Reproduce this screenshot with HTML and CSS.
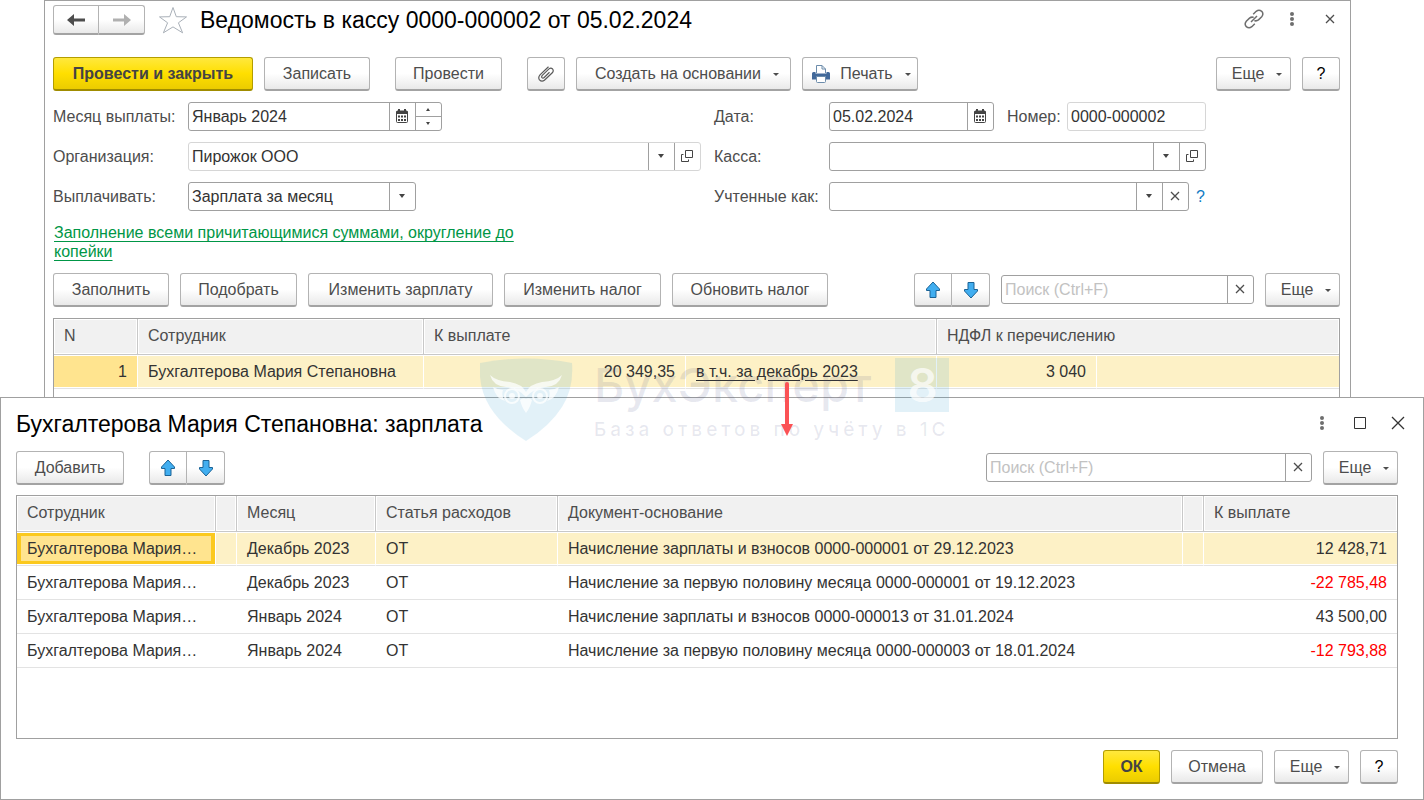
FILE: index.html
```html
<!DOCTYPE html>
<html lang="ru">
<head>
    <meta charset="UTF-8">
    <meta name="viewport" content="width=device-width, initial-scale=1.0">
    <title>Ведомость в кассу 0000-000002 от 05.02.2024</title>
    <link rel="stylesheet" href="styles.css">
</head>
<body>

    <!-- Shared icons -->
    <svg class="sprite" aria-hidden="true">
        <symbol id="i-up" viewBox="0 0 16 18">
            <path d="M8 1 L14.5 8 V9.500 H11 V16.500 H5 V9.500 H1.500 V8 Z" fill="#41aef0" stroke="#1b6396" stroke-width="1" stroke-linejoin="round"/>
        </symbol>
        <symbol id="i-down" viewBox="0 0 16 18">
            <path d="M8 17 L14.5 10 V8.500 H11 V1.500 H5 V8.500 H1.500 V10 Z" fill="#41aef0" stroke="#1b6396" stroke-width="1" stroke-linejoin="round"/>
        </symbol>
        <symbol id="i-calendar" viewBox="0 0 12 14">
            <path d="M1.500 2 H10.500 Q11.500 2 11.500 3 V12.500 Q11.500 13.500 10.500 13.500 H1.500 Q.5 13.500 .5 12.500 V3 Q.5 2 1.500 2 Z" fill="#fff" stroke="#444"/>
            <path d="M.5 2 H11.500 V5 H.5 Z M2 0 H4 V2 H2 Z M8 0 H10 V2 H8 Z" fill="#444"/>
            <path d="M2 6.500 H4 V8.500 H2 Z M5 6.500 H7 V8.500 H5 Z M8 6.500 H10 V8.500 H8 Z M2 10 H4 V12 H2 Z M5 10 H7 V12 H5 Z M8 10 H10 V12 H8 Z" fill="#444"/>
        </symbol>
        <symbol id="i-open" viewBox="0 0 12 12">
            <path d="M4.500 .5 H11.500 V7.500 H4.500 Z M2.500 4.500 H.5 V11.500 H7.500 V9.500" fill="none" stroke="#444"/>
        </symbol>
        <symbol id="i-cross" viewBox="0 0 10 10">
            <path d="M1 1 L9 9 M9 1 L1 9" fill="none" stroke="#4d4d4d" stroke-width="1.300"/>
        </symbol>
        <symbol id="i-dots" viewBox="0 0 4 14">
            <circle cx="2" cy="2" r="2" fill="#6e6e6e"/>
            <circle cx="2" cy="7" r="2" fill="#6e6e6e"/>
            <circle cx="2" cy="12" r="2" fill="#6e6e6e"/>
        </symbol>
    </svg>

    <!-- Document window -->
    <main class="document">
        <header class="title-bar">
            <div class="btn-group nav-group">
                <button class="btn" type="button" aria-label="Назад">
                    <svg width="18" height="12" viewBox="0 0 18 12"><path d="M7 0 V4.500 H18 V7.500 H7 V12 L0 6 Z" fill="#4d4d4d"/></svg>
                </button>
                <button class="btn" type="button" aria-label="Вперед">
                    <svg width="18" height="12" viewBox="0 0 18 12"><path d="M11 0 V4.500 H0 V7.500 H11 V12 L18 6 Z" fill="#b0b0b0"/></svg>
                </button>
            </div>
            <button class="icon-btn star" type="button" aria-label="В избранное">
                <svg width="30" height="28" viewBox="0 0 30 28"><path d="M15 1.500 L18.300 10.700 L28.500 10.900 L20.400 16.800 L24.600 26.800 L15 20.900 L5.400 26.800 L9.600 16.800 L1.500 10.900 L11.700 10.700 Z" fill="#fff" stroke="#a9b0b8"/></svg>
            </button>
            <h1>Ведомость в кассу 0000-000002 от 05.02.2024</h1>
            <div class="window-controls">
                <button class="icon-btn" type="button" aria-label="Получить ссылку">
                    <svg width="20" height="20" viewBox="0 0 20 20"><path d="M9.200 5.300 L12.200 2.300 Q15 .1 17.700 2.300 Q20 5 17.700 7.800 L14.500 10.900 Q12.500 12.400 10.300 11.600 M10.800 14.700 L7.800 17.700 Q5 19.900 2.300 17.700 Q0 15 2.300 12.200 L5.500 9.100 Q7.500 7.600 9.700 8.400 M7 13 L13 7" fill="none" stroke="#6e6e6e" stroke-width="1.500"/></svg>
                </button>
                <button class="icon-btn" type="button" aria-label="Меню"><svg width="4" height="14"><use href="#i-dots"/></svg></button>
                <button class="icon-btn" type="button" aria-label="Закрыть"><svg width="10" height="10"><use href="#i-cross"/></svg></button>
            </div>
        </header>

        <div class="toolbar main-toolbar">
            <button class="btn primary w-200" type="button">Провести и закрыть</button>
            <button class="btn w-106" type="button">Записать</button>
            <button class="btn w-107 apart" type="button">Провести</button>
            <button class="btn w-38 apart" type="button" aria-label="Присоединенные файлы">
                <svg width="18" height="18" viewBox="0 0 18 18"><path d="M11.500 1.800 L3 9.800 Q.8 12.400 2.500 14.800 Q4.700 17.300 7.400 15.300 L15.300 7.800 Q17 5.800 15.600 4 Q13.900 2.400 12 3.900 L5.300 10.300 Q4.200 11.600 5 12.600 Q6 13.500 7.200 12.500 L12.500 7.300" fill="none" stroke="#5a5a5a" stroke-width="1.200"/></svg>
            </button>
            <button class="btn menu w-215" type="button">Создать на основании</button>
            <button class="btn menu w-116" type="button">
                <svg class="printer" width="18" height="18" viewBox="0 0 18 18">
                    <path d="M4.500 8 V.5 H10 L13.500 4 V8 M10 .5 V4 H13.500" fill="#fff" stroke="#6c8cab"/>
                    <path d="M1.500 7 H3.500 V8.500 H14.500 V7 H16.500 Q18 7 18 8.500 V14.500 H0 V8.500 Q0 7 1.500 7 Z" fill="#42699a"/>
                    <path d="M4.500 11.500 H13.500 V16.500 Q13.500 17.500 12.500 17.500 H5.500 Q4.500 17.500 4.500 16.500 Z" fill="#fff" stroke="#6c8cab"/>
                </svg>Печать
            </button>
            <span class="spacer"></span>
            <button class="btn menu w-75" type="button">Еще</button>
            <button class="btn help w-38" type="button">?</button>
        </div>

        <form class="fields">
            <label for="month">Месяц выплаты:</label>
            <div class="line">
                <div class="field month">
                    <input id="month" type="text" value="Январь 2024">
                    <button class="cell" type="button" aria-label="Выбрать месяц"><svg width="12" height="14"><use href="#i-calendar"/></svg></button>
                    <span class="spin">
                        <button type="button" aria-label="Следующий месяц"><svg width="4" height="3" viewBox="0 0 4 3"><path d="M0 3 L2 0 L4 3 Z" fill="#444"/></svg></button>
                        <button type="button" aria-label="Предыдущий месяц"><svg width="4" height="3" viewBox="0 0 4 3"><path d="M0 0 L2 3 L4 0 Z" fill="#444"/></svg></button>
                    </span>
                </div>
            </div>
            <label class="second" for="date">Дата:</label>
            <div class="line">
                <div class="field date">
                    <input id="date" type="text" value="05.02.2024">
                    <button class="cell" type="button" aria-label="Выбрать дату"><svg width="12" height="14"><use href="#i-calendar"/></svg></button>
                </div>
                <label class="number-label" for="number">Номер:</label>
                <div class="field soft grow">
                    <input id="number" type="text" value="0000-000002">
                </div>
            </div>

            <label for="org">Организация:</label>
            <div class="field soft combo">
                <select id="org"><option>Пирожок ООО</option></select>
                <span class="cell arrow"></span>
                <button class="cell" type="button" aria-label="Открыть организацию"><svg width="12" height="12"><use href="#i-open"/></svg></button>
            </div>
            <label class="second" for="cash">Касса:</label>
            <div class="field combo">
                <select id="cash"><option></option></select>
                <span class="cell arrow"></span>
                <button class="cell" type="button" aria-label="Открыть кассу"><svg width="12" height="12"><use href="#i-open"/></svg></button>
            </div>

            <label for="pay">Выплачивать:</label>
            <div class="line">
                <div class="field combo pay">
                    <select id="pay"><option>Зарплата за месяц</option></select>
                    <span class="cell arrow"></span>
                </div>
            </div>
            <label class="second" for="counted">Учтенные как:</label>
            <div class="line">
                <div class="field combo grow">
                    <select id="counted"><option></option></select>
                    <span class="cell arrow"></span>
                    <button class="cell" type="button" aria-label="Очистить"><svg width="10" height="10"><use href="#i-cross"/></svg></button>
                </div>
                <a class="hint" href="#help">?</a>
            </div>
        </form>

        <p class="fill-note"><a href="#fill">Заполнение всеми причитающимися суммами, округление до копейки</a></p>

        <div class="toolbar">
            <button class="btn w-116" type="button">Заполнить</button>
            <button class="btn w-117" type="button">Подобрать</button>
            <button class="btn w-185" type="button">Изменить зарплату</button>
            <button class="btn w-157" type="button">Изменить налог</button>
            <button class="btn w-156" type="button">Обновить налог</button>
            <span class="spacer"></span>
            <div class="btn-group">
                <button class="btn w-38" type="button" aria-label="Вверх"><svg width="16" height="18"><use href="#i-up"/></svg></button>
                <button class="btn w-38" type="button" aria-label="Вниз"><svg width="16" height="18"><use href="#i-down"/></svg></button>
            </div>
            <div class="field search">
                <input type="text" placeholder="Поиск (Ctrl+F)" aria-label="Поиск сотрудника">
                <button class="cell" type="button" aria-label="Очистить поиск"><svg width="10" height="10"><use href="#i-cross"/></svg></button>
            </div>
            <button class="btn menu w-75" type="button">Еще</button>
        </div>

        <div class="table-box employees">
            <table>
                <colgroup>
                    <col class="c-n"><col class="c-employee"><col class="c-sum"><col class="c-note"><col class="c-tax"><col>
                </colgroup>
                <thead>
                    <tr>
                        <th>N</th>
                        <th>Сотрудник</th>
                        <th colspan="2">К выплате</th>
                        <th colspan="2">НДФЛ к перечислению</th>
                    </tr>
                </thead>
                <tbody>
                    <tr class="selected">
                        <td class="num current">1</td>
                        <td>Бухгалтерова Мария Степановна</td>
                        <td class="num">20 349,35</td>
                        <td><a href="#details">в т.ч. за декабрь 2023</a></td>
                        <td class="num">3 040</td>
                        <td></td>
                    </tr>
                </tbody>
            </table>
        </div>
    </main>

    <!-- Employee details window -->
    <section class="dialog">
        <header class="title-bar">
            <h2>Бухгалтерова Мария Степановна: зарплата</h2>
            <div class="window-controls">
                <button class="icon-btn" type="button" aria-label="Меню"><svg width="4" height="14"><use href="#i-dots"/></svg></button>
                <button class="icon-btn" type="button" aria-label="Развернуть"><svg width="12" height="12" viewBox="0 0 12 12"><path d="M.5 .5 H11.500 V11.500 H.5 Z" fill="none" stroke="#333"/></svg></button>
                <button class="icon-btn" type="button" aria-label="Закрыть"><svg width="14" height="14" viewBox="0 0 14 14"><path d="M1 1 L13 13 M13 1 L1 13" fill="none" stroke="#333" stroke-width="1.300"/></svg></button>
            </div>
        </header>

        <div class="toolbar">
            <button class="btn w-108" type="button">Добавить</button>
            <div class="btn-group apart">
                <button class="btn w-38" type="button" aria-label="Вверх"><svg width="16" height="18"><use href="#i-up"/></svg></button>
                <button class="btn w-38" type="button" aria-label="Вниз"><svg width="16" height="18"><use href="#i-down"/></svg></button>
            </div>
            <span class="spacer"></span>
            <div class="field search wide">
                <input type="text" placeholder="Поиск (Ctrl+F)" aria-label="Поиск начисления">
                <button class="cell" type="button" aria-label="Очистить поиск"><svg width="10" height="10"><use href="#i-cross"/></svg></button>
            </div>
            <button class="btn menu w-75" type="button">Еще</button>
        </div>

        <div class="table-box payments">
            <table>
                <colgroup>
                    <col class="c-person"><col class="c-gap"><col class="c-month"><col class="c-article"><col><col class="c-gap"><col class="c-total">
                </colgroup>
                <thead>
                    <tr>
                        <th>Сотрудник</th>
                        <th></th>
                        <th>Месяц</th>
                        <th>Статья расходов</th>
                        <th>Документ-основание</th>
                        <th></th>
                        <th>К выплате</th>
                    </tr>
                </thead>
                <tbody>
                    <tr class="selected">
                        <td class="current focused">Бухгалтерова Мария…</td>
                        <td></td>
                        <td>Декабрь 2023</td>
                        <td>ОТ</td>
                        <td>Начисление зарплаты и взносов 0000-000001 от 29.12.2023</td>
                        <td></td>
                        <td class="num">12 428,71</td>
                    </tr>
                    <tr>
                        <td>Бухгалтерова Мария…</td>
                        <td></td>
                        <td>Декабрь 2023</td>
                        <td>ОТ</td>
                        <td>Начисление за первую половину месяца 0000-000001 от 19.12.2023</td>
                        <td></td>
                        <td class="num negative">-22 785,48</td>
                    </tr>
                    <tr>
                        <td>Бухгалтерова Мария…</td>
                        <td></td>
                        <td>Январь 2024</td>
                        <td>ОТ</td>
                        <td>Начисление зарплаты и взносов 0000-000013 от 31.01.2024</td>
                        <td></td>
                        <td class="num">43 500,00</td>
                    </tr>
                    <tr>
                        <td>Бухгалтерова Мария…</td>
                        <td></td>
                        <td>Январь 2024</td>
                        <td>ОТ</td>
                        <td>Начисление за первую половину месяца 0000-000003 от 18.01.2024</td>
                        <td></td>
                        <td class="num negative">-12 793,88</td>
                    </tr>
                </tbody>
            </table>
        </div>

        <footer class="toolbar">
            <span class="spacer"></span>
            <button class="btn primary w-57" type="button">ОК</button>
            <button class="btn w-92" type="button">Отмена</button>
            <button class="btn menu w-75" type="button">Еще</button>
            <button class="btn help w-38" type="button">?</button>
        </footer>

        <!-- Watermark -->
        <div class="watermark" aria-hidden="true">
            <svg class="shield" width="94" height="84" viewBox="0 0 94 84">
                <path d="M0 5 Q46 -4 92 5 Q94 30 82 49 Q70 68 46 83 Q22 68 10 49 Q-2 30 0 5 Z" fill="#3b9fd0" fill-opacity=".15"/>
                <g fill="#fff" fill-opacity=".75">
                    <path d="M10 17 Q16 23 30 24 Q42 26 46 34 Q50 26 62 24 Q76 23 82 17 Q79 28 66 29 Q54 30 46 39 Q38 30 26 29 Q13 28 10 17 Z"/>
                    <path d="M13 29 Q18 32 23 32 Q21 38 25 43 Q16 41 13 29 Z M79 29 Q74 32 69 32 Q71 38 67 43 Q76 41 79 29 Z"/>
                    <path d="M40 42 Q43 39 46 41 Q49 39 52 42 Q50 50 46 55 Q42 50 40 42 Z"/>
                    <circle cx="32" cy="38" r="3"/>
                    <circle cx="60" cy="38" r="3"/>
                </g>
                <g fill="none" stroke="#fff" stroke-opacity=".75" stroke-width="2">
                    <circle cx="32" cy="38" r="7"/>
                    <circle cx="60" cy="38" r="7"/>
                </g>
            </svg>
            <div class="brand">
                <div class="brand-name"><span>БухЭксперт</span><b>8</b></div>
                <div class="brand-motto">База ответов по учёту в 1С</div>
            </div>
        </div>

        <svg class="pointer" width="14" height="56" viewBox="0 0 14 56" aria-hidden="true">
            <path d="M7 3 V44" stroke="#fb5255" stroke-width="4" stroke-linecap="round"/>
            <path d="M1 43 H13 L7 55 Z" fill="#fb5255"/>
        </svg>
    </section>

</body>
</html>
```

FILE: styles.css
```css
* {
    box-sizing: border-box;
}

body {
    font-family: "Liberation Sans", Arial, sans-serif;
    font-size: 16px;
    line-height: 20px;
    margin: 0;
    min-height: 100vh;
    display: flex;
    flex-direction: column;
    background-color: #fff;
    color: #333;
}

button, input, select {
    font: inherit;
    margin: 0;
}

svg {
    display: block;
}

.sprite {
    position: absolute;
    width: 0;
    height: 0;
}

/* Windows */
.document {
    margin: 0 73px 0 44px;
    padding: 4px 10px 0 8px;
    border: 1px solid #a0a0a0;
    border-bottom: 0;
}

.dialog {
    position: relative;
    flex: 1;
    display: flex;
    flex-direction: column;
    padding: 11px 25px 15px 15px;
    border: 1px solid #a0a0a0;
    background-color: #fff;
}

.title-bar {
    display: flex;
    align-items: center;
    height: 30px;
}

h1, h2 {
    margin: 0;
    font-size: 23px;
    line-height: 30px;
    font-weight: normal;
    color: #000;
}

.star {
    margin: 0 12px 0 13px;
}

.window-controls {
    display: flex;
    gap: 18px;
    margin-left: auto;
    padding-bottom: 2px;
}

.dialog .window-controls {
    margin-right: -10px;
}

.icon-btn {
    display: flex;
    align-items: center;
    justify-content: center;
    min-width: 20px;
    padding: 0;
    border: 0;
    background: none;
    cursor: pointer;
}

/* Buttons */
.toolbar {
    display: flex;
    align-items: center;
    gap: 11px;
}

.main-toolbar {
    margin-top: 22px;
}

.dialog .toolbar {
    margin-top: 12px;
}

.spacer {
    flex: 1;
}

.btn {
    display: flex;
    align-items: center;
    justify-content: center;
    height: 34px;
    padding: 0;
    border: 1px solid #b3b3b3;
    border-bottom: 2px solid #a3a3a3;
    border-radius: 3px;
    background: linear-gradient(#fff 50%, #e9e9e9);
    color: #4d4d4d;
    white-space: nowrap;
    cursor: pointer;
}

.btn:hover {
    background: #f2f2f2;
}

.primary {
    border-color: #b39d00;
    border-bottom-color: #a08c00;
    background: linear-gradient(#ffe83d, #ffdf00 50%, #ebcc00);
    color: #444;
    font-weight: bold;
}

.primary:hover {
    background: #ffe83d;
}

.help {
    color: #000;
}

.apart {
    margin-left: 14px;
}

.menu::after {
    content: "";
    margin: 2px -7px 0 12px;
    border: 3px solid transparent;
    border-top-color: #4d4d4d;
    border-bottom: 0;
}

.printer {
    margin: 0 10px 0 -4px;
}

.btn-group {
    display: flex;
}

.btn-group .btn:first-child {
    border-radius: 3px 0 0 3px;
}

.btn-group .btn:last-child {
    border-left: 0;
    border-radius: 0 3px 3px 0;
}

.nav-group .btn {
    width: 46px;
    height: 30px;
}

.w-38 { width: 38px; }
.w-57 { width: 57px; }
.w-75 { width: 75px; }
.w-92 { width: 92px; }
.w-106 { width: 106px; }
.w-107 { width: 107px; }
.w-108 { width: 108px; }
.w-116 { width: 116px; }
.w-117 { width: 117px; }
.w-156 { width: 156px; }
.w-157 { width: 157px; }
.w-185 { width: 185px; }
.w-200 { width: 200px; }
.w-215 { width: 215px; }

/* Form */
.fields {
    display: grid;
    grid-template-columns: 135px 513fr 128px 377fr;
    align-items: center;
    row-gap: 11px;
    margin-top: 11px;
    padding-right: 134px;
    color: #4d4d4d;
}

.second {
    padding-left: 13px;
}

.line {
    display: flex;
    align-items: center;
}

.field {
    display: flex;
    height: 29px;
    border: 1px solid #a0a0a0;
    border-radius: 3px;
    background-color: #fff;
}

.soft {
    border-color: #d6d6d6;
}

.grow {
    flex: 1;
}

.field input, .field select {
    flex: 1;
    min-width: 0;
    width: 100%;
    padding: 0 3px;
    border: 0;
    background: none;
    color: #333;
    outline: none;
}

.field input::placeholder {
    color: #c2c2c2;
}

.cell {
    display: flex;
    align-items: center;
    justify-content: center;
    width: 26px;
    padding: 0 2px 2px 0;
    border: 0;
    border-left: 1px solid #a0a0a0;
    background: none;
}

.combo {
    display: grid;
    grid-template-columns: 1fr 26px;
    grid-auto-columns: 26px;
}

/* The list box runs under its arrow so the whole field opens it */
.combo select {
    grid-row: 1;
    grid-column: 1 / 3;
    appearance: none;
}

.combo .arrow {
    grid-row: 1;
    grid-column: 2;
    pointer-events: none;
}

.combo button {
    grid-row: 1;
    grid-column: 3;
}

.arrow::after {
    content: "";
    border: 3px solid transparent;
    border-top: 4px solid #444;
    border-bottom: 0;
}

.spin {
    display: flex;
    flex-direction: column;
    width: 26px;
    border-left: 1px solid #a0a0a0;
}

.spin button {
    flex: 1;
    display: flex;
    align-items: center;
    justify-content: center;
    padding: 0 2px 0 0;
    border: 0;
    background: none;
}

.spin button + button {
    border-top: 1px solid #a0a0a0;
}

.month {
    width: 254px;
}

.date {
    width: 165px;
}

.pay {
    width: 228px;
}

.number-label {
    width: 73px;
    padding-left: 13px;
}

.hint {
    width: 17px;
    padding-left: 7px;
    color: #0f7bc4;
    text-decoration: none;
}

.fill-note {
    max-width: 500px;
    margin: 12px 0;
    padding-left: 1px;
    line-height: 19px;
}

.fill-note a {
    color: #009646;
    text-underline-offset: 3px;
}

.search {
    width: 253px;
    margin-bottom: 1px;
}

.search.wide {
    width: 326px;
}

/* Tables */
.table-box {
    border: 1px solid #a0a0a0;
}

.employees {
    margin-top: 11px;
    padding-bottom: 8px;
    border-bottom: 0;
}

.payments {
    flex: 1;
    margin: 10px 0 -1px;
}

table {
    width: 100%;
    table-layout: fixed;
    border-spacing: 0;
}

th, td {
    padding: 0 10px;
    overflow: hidden;
    text-align: left;
    font-weight: normal;
    white-space: nowrap;
}

th {
    height: 36px;
    padding-bottom: 2px;
    border-right: 1px solid #c8c8c8;
    border-bottom: 1px solid #c8c8c8;
    background-color: #f1f1f1;
    box-shadow: inset 0 0 0 1px #fff;
    color: #4d4d4d;
}

td {
    height: 34px;
    border-bottom: 1px solid #e3e3e3;
}

th:last-child, td:last-child {
    border-right: 0;
}

.selected td {
    border-right: 1px solid #fff;
    background-color: #fdf1c6;
    box-shadow: inset 0 1px #fff, inset 0 -1px #fff;
}

.selected td:last-child {
    border-right: 0;
}

.selected .current {
    background-color: #ffe48f;
}

.selected .focused {
    box-shadow: inset 0 1px #fff, inset 0 -1px #fff, inset 0 0 0 4px #fbc91e;
}

td a {
    color: #333;
    text-underline-offset: 3px;
}

.num {
    text-align: right;
}

.negative {
    color: #f00;
}

.c-n { width: 84px; }
.c-employee { width: 286px; }
.c-sum { width: 262px; }
.c-note { width: 251px; }
.c-tax { width: 160px; }
.c-person { width: 199px; }
.c-gap { width: 21px; }
.c-month { width: 139px; }
.c-article { width: 182px; }
.c-total { width: 193px; }

/* Watermark and pointer lie over both windows */
.watermark {
    position: absolute;
    top: -40px;
    left: 479px;
    display: flex;
    gap: 20px;
    pointer-events: none;
    font-family: Inter, sans-serif;
    font-weight: 500;
    color: rgba(70, 75, 130, 0.12);
}

.brand-name {
    display: flex;
    align-items: center;
    justify-content: space-between;
    gap: 20px;
    font-size: 47px;
    line-height: 54px;
}

.brand-name b {
    width: 54px;
    height: 54px;
    background-color: rgba(59, 159, 208, 0.15);
    color: rgba(255, 255, 255, 0.7);
    font-weight: 600;
    text-align: center;
}

.brand-motto {
    margin-top: 6px;
    font-size: 19px;
    line-height: 24px;
    letter-spacing: 4px;
}

.pointer {
    position: absolute;
    top: -17px;
    left: 779px;
    pointer-events: none;
}
```
